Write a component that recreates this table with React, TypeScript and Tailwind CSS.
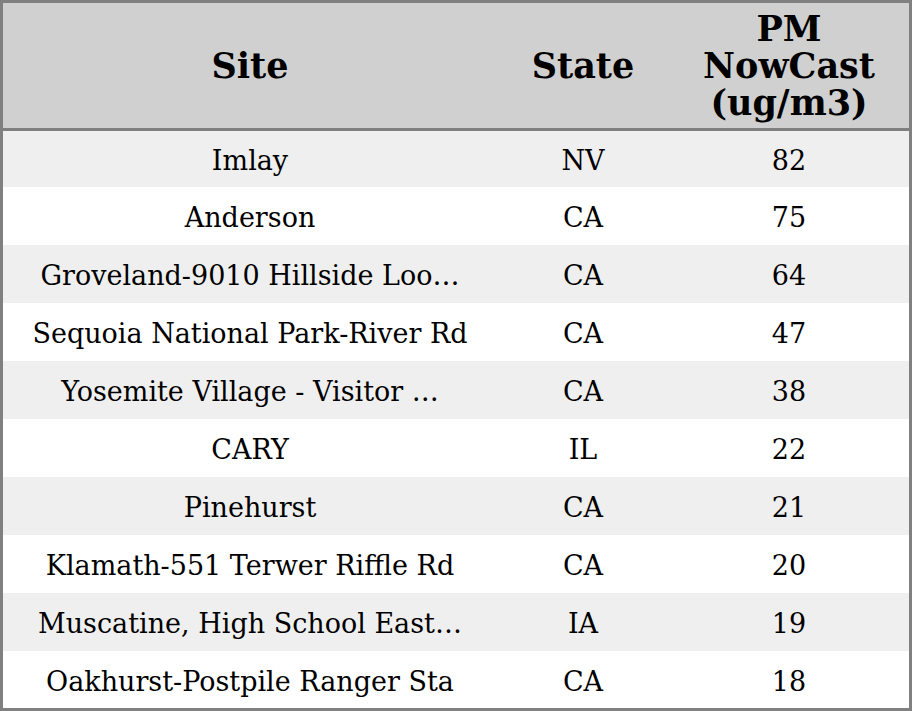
const rows: [string, string, number][] = [
  ["Imlay", "NV", 82],
  ["Anderson", "CA", 75],
  ["Groveland-9010 Hillside Loo…", "CA", 64],
  ["Sequoia National Park-River Rd", "CA", 47],
  ["Yosemite Village - Visitor …", "CA", 38],
  ["CARY", "IL", 22],
  ["Pinehurst", "CA", 21],
  ["Klamath-551 Terwer Riffle Rd", "CA", 20],
  ["Muscatine, High School East…", "IA", 19],
  ["Oakhurst-Postpile Ranger Sta", "CA", 18],
];

export default function App() {
  return (
    <div className="w-[912px] h-[711px] bg-white font-['DejaVu_Serif',serif] text-black">
      <div className="w-full h-full border-[3px] border-[#808080] overflow-hidden">
        <table className="w-full table-fixed border-collapse">
          <colgroup>
            <col className="w-[494px]" />
            <col className="w-[172px]" />
            <col />
          </colgroup>
          <thead>
            <tr className="bg-[#d0d0d0] h-[126px] border-b-[3px] border-[#808080]">
              <th className="pt-[1px] text-[35px] leading-[37px] font-bold text-center">Site</th>
              <th className="pt-[1px] text-[35px] leading-[37px] font-bold text-center">State</th>
              <th className="pt-[1px] text-[35px] leading-[37px] font-bold text-center">
                PM
                <br />
                NowCast
                <br />
                (ug/m3)
              </th>
            </tr>
          </thead>
          <tbody>
            {rows.map(([site, state, value], i) => (
              <tr
                key={site}
                className={i % 2 === 0 ? "bg-[#efefef] h-[58px]" : "bg-white h-[58px]"}
              >
                <td className="pt-[4px] text-[27px] text-center whitespace-nowrap">{site}</td>
                <td className="pt-[4px] text-[27px] text-center">{state}</td>
                <td className="pt-[4px] text-[27px] text-center">{value}</td>
              </tr>
            ))}
          </tbody>
        </table>
      </div>
    </div>
  );
}
